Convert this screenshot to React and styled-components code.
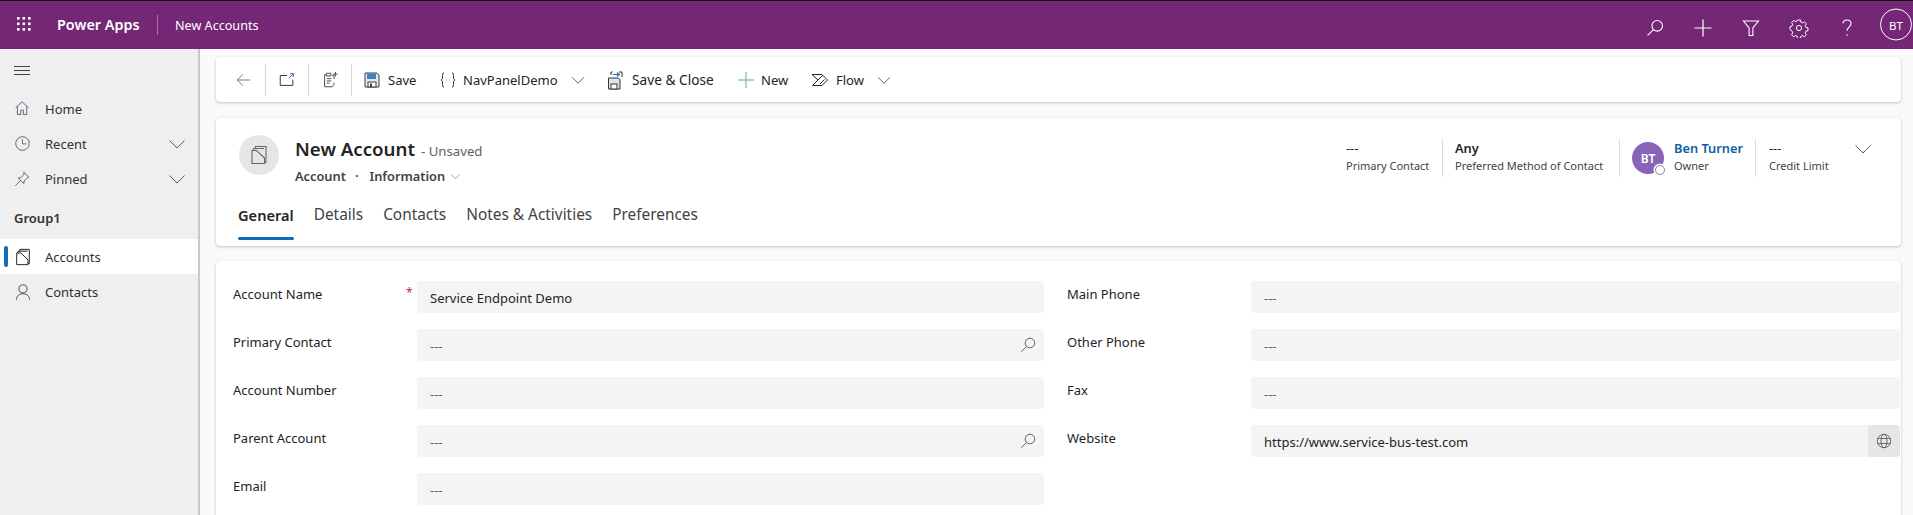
import React from "react";
import styled, { createGlobalStyle } from "styled-components";

const Global = createGlobalStyle`
  html, body { margin: 0; padding: 0; background: #fafafa; }
  * { box-sizing: border-box; }
  body { font-family: "Noto Sans", "Open Sans", Arial, sans-serif; font-size: 13px; color: #242424; }
`;

const Page = styled.div`
  width: 1913px; height: 515px; overflow: hidden; display: flex; flex-direction: column;
  border-top: 1px solid #111; background: #fafafa;
`;
const Header = styled.header`
  height: 48px; flex: none; background: #742774; color: #fff; display: flex; align-items: center; position: relative;
`;
const Waffle = styled.div`
  width: 48px; height: 48px; display: flex; align-items: center; justify-content: center; margin-right: 9px; margin-top: -2px;
`;
const Brand = styled.div`
  font-size: 14.4px; font-weight: 600; width: 101px; height: 20px; line-height: 20px; border-right: 1px solid rgba(255,255,255,.35); margin-right: 17px;
`;
const AppName = styled.div`font-size: 12.6px;`;
const HeaderTools = styled.div`
  margin-left: auto; display: flex; align-items: center; height: 48px; padding-right: 1px;
`;
const HeaderBtn = styled.div`
  width: 48px; height: 48px; display: flex; align-items: center; justify-content: center; margin-top: 6px;
`;
const Me = styled.div`
  width: 32px; height: 32px; border: 1px solid #fff; border-radius: 50%; display: flex; align-items: center; justify-content: center;
  font-size: 11.5px; margin-left: 9px; transform: translateY(-0.5px);
`;
const Body = styled.div`flex: 1; display: flex; min-height: 0;`;
const Side = styled.nav`
  width: 200px; flex: none; background: #efefef; border-right: 2px solid #c9c9c9;
`;
const Burger = styled.div`height: 42px; padding: 15px 0 0 13px;`;
const NavItem = styled.div`
  height: 35px; display: flex; align-items: center; padding-left: 14px; position: relative; font-size: 13px;
  background: ${p => (p.$active ? "#fff" : "transparent")}; color: #323130;
`;
const NavIcon = styled.span`width: 31px; height: 20px; display: flex; align-items: center; flex: none;`;
const NavChevron = styled.span`position: absolute; left: 167px; top: 8px; display: flex;`;
const ActiveBar = styled.span`
  position: absolute; left: 4px; top: 7px; width: 4px; height: 21px; border-radius: 2px; background: #0f6cbd;
`;
const GroupTitle = styled.div`
  height: 43px; padding: 13px 0 0 14px; font-size: 13px; font-weight: 600; line-height: 18px; color: #323130;
`;
const Main = styled.main`flex: 1; min-width: 0; padding: 8px 12px 0 16px; display: flex; flex-direction: column; gap: 16px;`;
const Card = styled.section`
  background: #fff; border-radius: 4px; box-shadow: 0 1px 3px rgba(0,0,0,.22), 0 0 1px rgba(0,0,0,.1);
`;
const Toolbar = styled(Card)`
  height: 45px; flex: none; display: flex; align-items: center; position: relative;
`;
const Btn = styled.div`
  display: flex; align-items: center; height: 32px; font-size: ${p => p.$fs || 13}px; color: #242424; flex: none; white-space: nowrap;
  width: ${p => p.$w}px; padding-left: ${p => p.$pl || 0}px;
`;
const SepBtn = styled.div`
  display: flex; align-items: center; justify-content: center; height: 32px; flex: none; border-right: 1px solid #d6d6d6;
  width: ${p => p.$w}px; padding-left: ${p => p.$pl || 0}px;
`;
const BtnIcon = styled.span`width: ${p => p.$w || 24}px; flex: none; display: flex; align-items: center;`;
const InlineChevron = styled.span`display: flex; margin-left: ${p => p.$ml ?? 12}px;`;
const Head = styled(Card)`height: 128px; flex: none; position: relative; display: flex; flex-direction: column;`;
const HeadTop = styled.div`display: flex; height: 70px; padding: 17px 0 0 23px;`;
const EntityIcon = styled.div`
  width: 40px; height: 40px; border-radius: 50%; background: #e6e6e6; display: flex; align-items: center; justify-content: center; flex: none; margin-right: 16px;
`;
const TitleBlock = styled.div`flex: none;`;
const Title = styled.div`display: flex; align-items: baseline; height: 28px; line-height: 28px;`;
const TitleMain = styled.span`font-size: 18.7px; font-weight: 600; color: #242424; margin-right: 6px;`;
const Unsaved = styled.span`font-size: 13.2px; color: #616161;`;
const Crumbs = styled.div`display: flex; align-items: center; font-size: 12.8px; font-weight: 600; color: #424242; height: 20px; margin-top: 3px;`;
const CrumbDot = styled.span`margin: 0 11px 0 9px;`;
const CrumbChevron = styled.span`margin-left: 5px; display: flex;`;
const Facts = styled.div`margin-left: auto; display: flex; align-items: flex-start; margin-top: 4px; position: relative; padding-right: 71px;`;
const Fact = styled.div`
  height: 38px; padding: 0 ${p => p.$pr ?? 12}px 0 ${p => p.$pl ?? 13}px; border-right: ${p => (p.$last ? "none" : "1px solid #dcdcdc")}; display: flex; align-items: flex-start;
  width: ${p => p.$w}px; flex: none;
`;
const FactValue = styled.div`
  font-size: 12.8px; font-weight: ${p => (p.$link || p.$strong ? 600 : 400)}; color: ${p => (p.$link ? "#115ea3" : "#242424")}; line-height: 18px; white-space: nowrap;
`;
const FactLabel = styled.div`font-size: 11px; color: #424242; line-height: 18px; white-space: nowrap;`;
const Persona = styled.div`
  width: 32px; height: 32px; border-radius: 50%; background: #8764b8; color: #fff; font-size: 12px; font-weight: 600;
  display: flex; align-items: center; justify-content: center; flex: none; margin: 3px 10px 0 0; position: relative;
`;
const Presence = styled.span`
  position: absolute; right: -1px; bottom: -1px; width: 10px; height: 10px; border-radius: 50%; background: #fff; border: 1.5px solid #8a8a8a; box-shadow: 0 0 0 1.5px #fff;
`;
const HeadChevron = styled.div`position: absolute; right: 28px; top: 21px; display: flex;`;
const Tabs = styled.div`display: flex; padding-left: 22px; gap: 20px; height: 58px;`;
const Tab = styled.div`
  font-size: ${p => (p.$active ? 14.6 : 15.4)}px; line-height: 20px; padding-top: 17px; height: 52px; position: relative; font-weight: ${p => (p.$active ? 600 : 400)}; color: ${p => (p.$active ? "#242424" : "#424242")};
  ${p => p.$active && `&::after { content: ""; position: absolute; left: 0; right: 0; bottom: 0; height: 3px; border-radius: 2px; background: #0f6cbd; }`}
`;
const FormCard = styled(Card)`
  flex: 1; margin-top: -1px; border-radius: 4px 4px 0 0; padding: 20px 2px 0 17px; display: grid; grid-template-columns: 811px 833px; column-gap: 23px; align-content: start;
`;
const Column = styled.div`display: flex; flex-direction: column;`;
const Row = styled.div`height: 48px; display: flex; position: relative;`;
const Label = styled.div`width: 184px; flex: none; font-size: 13px; line-height: 20px; padding-top: 3px; color: #242424; position: relative;`;
const Required = styled.span`position: absolute; left: 173px; top: 2px; color: #c4314b; font-size: 12px;`;
const Field = styled.div`
  flex: 1; height: 32px; background: #f4f4f4; border-radius: 4px; display: flex; align-items: center; padding: 2px 0 0 13px; font-size: 13px; overflow: hidden; position: relative;
  color: ${p => (p.$empty ? "#616161" : "#242424")};
`;
const FieldIcon = styled.span`position: absolute; right: 7px; top: 7px; display: flex;`;
const GlobeBtn = styled.span`
  position: absolute; right: 0; top: 0; bottom: 0; width: 32px; background: #e6e6e6; display: flex; align-items: center; justify-content: center;
`;

const S = ({ size = 20, w, h, vb = "0 0 20 20", children, color = "currentColor", sw = 1 }) => (
  <svg width={w || size} height={h || size} viewBox={vb} fill="none" stroke={color} strokeWidth={sw} style={{ display: "block" }}>{children}</svg>
);
const WaffleIcon = () => (
  <svg width="16" height="16" viewBox="0 0 16 16" fill="#fff">
    {[1, 6.5, 12].map(y => [1, 6.5, 12].map(x => <rect key={`${x}-${y}`} x={x} y={y} width="2.6" height="2.6" />))}
  </svg>
);
const SearchIcon = ({ color = "#fff", size = 20 }) => (
  <S size={size} color={color} sw={1.1}><circle cx="12.2" cy="7.8" r="5.3" /><path d="M8.4 11.6 2.6 17.4" /></S>
);
const Chevron = ({ size = 20, color = "#605e5c" }) => (
  <S size={size} color={color}><path d="M2.5 6.5 10 14l7.5-7.5" /></S>
);
const AccountIcon = ({ color = "#242424", size = 20 }) => (
  <S size={size} color={color} sw={1.1}>
    <path d="M6.5 4V1.5H17V17.5H15" />
    <path d="M4.5 6V3.5H15" />
    <path d="M3 5.5h4.5l8 7.5v5.500H3Z" />
  </S>
);
const SaveIcon = () => (
  <svg width="16" height="16" viewBox="0 0 16 16" fill="none" style={{ display: "block" }}>
    <path d="M1 1h12l2 2v12H1Z" fill="#dfeaf6" stroke="#3d3d3d" />
    <rect x="3" y="1.5" width="9" height="5.5" fill="#3f82c4" />
    <rect x="4" y="10" width="8" height="5" fill="#fff" stroke="#3d3d3d" /><rect x="6" y="11.5" width="2" height="3.5" fill="#3d3d3d" />
  </svg>
);
const SmallChevron = ({ ml }) => (
  <InlineChevron $ml={ml}><Chevron size={16} color="#424242" /></InlineChevron>
);

const fieldsLeft = [
  { label: "Account Name", value: "Service Endpoint Demo", required: true },
  { label: "Primary Contact", search: true },
  { label: "Account Number" },
  { label: "Parent Account", search: true },
  { label: "Email" },
];
const fieldsRight = [
  { label: "Main Phone" },
  { label: "Other Phone" },
  { label: "Fax" },
  { label: "Website", value: "https://www.service-bus-test.com", globe: true },
];

const FormRow = ({ label, value, required, search, globe }) => (
  <Row>
    <Label>{label}{required && <Required>*</Required>}</Label>
    <Field $empty={!value}>
      {value || "---"}
      {search && <FieldIcon><SearchIcon color="#616161" size={18} /></FieldIcon>}
      {globe && (
        <GlobeBtn>
          <S size={18} color="#616161">
            <circle cx="10" cy="10" r="7.5" /><ellipse cx="10" cy="10" rx="3.4" ry="7.5" /><path d="M3 7.2h14M3 12.8h14" />
          </S>
        </GlobeBtn>
      )}
    </Field>
  </Row>
);

export default function App() {
  return (
    <Page>
      <Global />
      <Header>
        <Waffle><WaffleIcon /></Waffle>
        <Brand>Power Apps</Brand>
        <AppName>New Accounts</AppName>
        <HeaderTools>
          <HeaderBtn><SearchIcon /></HeaderBtn>
          <HeaderBtn>
            <S size={20} color="#fff" sw={1.2}><path d="M10 1.5v17M1.5 10h17" /></S>
          </HeaderBtn>
          <HeaderBtn>
            <S size={20} color="#fff" sw={1.1}><path d="M2.5 3h15l-5.6 7v7.5H8.1V10Z" /></S>
          </HeaderBtn>
          <HeaderBtn>
            <S size={20} color="#fff" sw={1}>
              <circle cx="10" cy="10" r="2.6" />
              <path d="M8.6 2h2.8l.5 2.2 1.5.7 2-1.1 2 2-1.2 1.900.7 1.600 2.100.6v2.800l-2.100.5-.7 1.600 1.200 2-2 2-2-1.200-1.500.7-.5 2.100H8.600l-.5-2.100-1.600-.7-1.900 1.200-2-2 1.100-2-.6-1.600L1 11.400V8.600l2.100-.6.6-1.600-1.100-1.900 2-2 1.900 1.100 1.600-.7Z" />
            </S>
          </HeaderBtn>
          <HeaderBtn>
            <S size={20} color="#fff" sw={1.1}><path d="M6 5.5C6 3.2 7.8 2 10 2s4 1.3 4 3.6c0 3.4-4 3.6-4 7.2" /><path d="M10 16.2v1.6" /></S>
          </HeaderBtn>
          <Me>BT</Me>
        </HeaderTools>
      </Header>
      <Body>
        <Side>
          <Burger>
            <S w={18} h={14} vb="0 0 18 14" color="#424242"><path d="M1 2.5h16M1 6.5h16M1 10.5h16" /></S>
          </Burger>
          <NavItem>
            <NavIcon>
              <S size={17} color="#44546a"><path d="M2 9 9.5 2.2 17 9M4 7.5V17h4v-5h3v5h4V7.5" /></S>
            </NavIcon>Home
          </NavItem>
          <NavItem>
            <NavIcon>
              <S size={17} color="#44546a"><circle cx="10" cy="10" r="8" /><path d="M10 5v5.5h4.5" /></S>
            </NavIcon>Recent
            <NavChevron><Chevron /></NavChevron>
          </NavItem>
          <NavItem>
            <NavIcon>
              <S size={17} color="#44546a"><path d="m11.5 2.5 6 6-2 .8-3.600 3.600-.4 3-6.500-6.500 3-.4 3.600-3.600ZM7.300 12.700 1.500 18.500" /></S>
            </NavIcon>Pinned
            <NavChevron><Chevron /></NavChevron>
          </NavItem>
          <GroupTitle>Group1</GroupTitle>
          <NavItem $active>
            <ActiveBar />
            <NavIcon><AccountIcon size={18} /></NavIcon>Accounts
          </NavItem>
          <NavItem>
            <NavIcon>
              <S size={18} color="#424242"><circle cx="10" cy="6.5" r="4.5" /><path d="M2.8 18.5c0-4 2.6-6.5 7.2-6.5s7.2 2.5 7.2 6.5" /></S>
            </NavIcon>Contacts
          </NavItem>
        </Side>
        <Main>
          <Toolbar>
            <SepBtn $w={50} $pl={6}>
              <S size={18} color="#6b6b6b"><path d="M17 10H3M9 3.5 2.5 10 9 16.5" /></S>
            </SepBtn>
            <SepBtn $w={43}>
              <S size={18} color="#242424"><path d="M10 5H2.5v11h14V10" /><path d="M12 8l5-5M13.5 3H17v3.5" stroke="#2b579a" /></S>
            </SepBtn>
            <SepBtn $w={43}>
              <S size={18} color="#3d3d3d">
                <path d="M12.5 5h2v4M5.500 4H4v13.500h8.500l2-2.500V13" /><path d="M6 2.500h5v3H6ZM6.500 8.500h5M6.500 11h5M6.500 13.500h3" />
                <path d="M16 1v5M13.500 3.500h5" />
              </S>
            </SepBtn>
            <Btn $w={85} $pl={12}>
              <BtnIcon $w={24}><SaveIcon /></BtnIcon>Save
            </Btn>
            <Btn $w={170} $pl={2}>
              <BtnIcon $w={24}><S size={18} vb="0 0 18 18" color="#242424"><path d="M5 2C3 2 3.500 4 3.500 6S3.500 8 2 9c1.500 1 1.500 1 1.500 3S3 16 5 16M13 2c2 0 1.500 2 1.500 4s0 2 1.500 3c-1.500 1-1.500 1-1.500 3s.5 4-1.500 4" /></S></BtnIcon>
              NavPanelDemo
              <SmallChevron />
            </Btn>
            <Btn $w={130} $fs={13.7}>
              <BtnIcon $w={25}>
                <svg width="18" height="20" viewBox="0 0 18 20" fill="none" style={{ display: "block" }}>
                  <path d="M1.500 8h10l1.500 1.500V19H1.500Z" fill="#dde3ea" stroke="#333" />
                  <rect x="4" y="14" width="6" height="5" fill="#fff" stroke="#333" />
                  <path d="M4 5V2h1.500M12 2h3v5" stroke="#333" /><path d="M6 4.500h6M10 2.500l2.300 2-2.300 2" stroke="#1f6fbf" strokeWidth="1.2" />
                </svg>
              </BtnIcon>Save &amp; Close
            </Btn>
            <Btn $w={74} $pl={1}>
              <BtnIcon $w={23}><S size={16} vb="0 0 16 16" color="#7fcf9f" sw={1.4}><path d="M8 0v16M0 8h16" /></S></BtnIcon>New
            </Btn>
            <Btn $w={90}>
              <BtnIcon $w={25}>
                <S size={18} vb="0 0 18 18" color="#242424"><path d="M1 3.500h10l5.500 5.500-5.500 5.500H1.500L7 9ZM7 9l4.500-4.500M9 13l4.500-4.500" /></S>
              </BtnIcon>Flow
              <SmallChevron />
            </Btn>
          </Toolbar>
          <Head>
            <HeadTop>
              <EntityIcon><AccountIcon color="#666" size={20} /></EntityIcon>
              <TitleBlock>
                <Title><TitleMain>New Account</TitleMain><Unsaved>- Unsaved</Unsaved></Title>
                <Crumbs>
                  Account<CrumbDot>·</CrumbDot>Information
                  <CrumbChevron><Chevron size={11} /></CrumbChevron>
                </Crumbs>
              </TitleBlock>
              <Facts>
                <Fact $w={97} $pl={0}>
                  <div><FactValue>---</FactValue><FactLabel>Primary Contact</FactLabel></div>
                </Fact>
                <Fact $w={177} $pl={12}>
                  <div><FactValue $strong>Any</FactValue><FactLabel>Preferred Method of Contact</FactLabel></div>
                </Fact>
                <Fact $w={136} $pl={12} $pr={0}>
                  <Persona>BT<Presence /></Persona>
                  <div><FactValue $link>Ben Turner</FactValue><FactLabel>Owner</FactLabel></div>
                </Fact>
                <Fact $w={74} $last>
                  <div><FactValue>---</FactValue><FactLabel>Credit Limit</FactLabel></div>
                </Fact>
              </Facts>
              <HeadChevron><Chevron size={20} /></HeadChevron>
            </HeadTop>
            <Tabs>
              <Tab $active>General</Tab>
              <Tab>Details</Tab>
              <Tab>Contacts</Tab>
              <Tab>Notes &amp; Activities</Tab>
              <Tab>Preferences</Tab>
            </Tabs>
          </Head>
          <FormCard>
            <Column>{fieldsLeft.map(f => <FormRow key={f.label} {...f} />)}</Column>
            <Column>{fieldsRight.map(f => <FormRow key={f.label} {...f} />)}</Column>
          </FormCard>
        </Main>
      </Body>
    </Page>
  );
}
